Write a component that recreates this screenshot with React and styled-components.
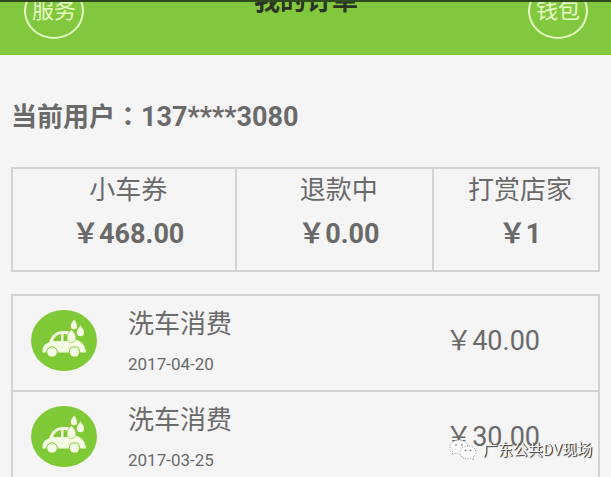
import React from "react";
import styled, { createGlobalStyle } from "styled-components";

const GlobalStyle = createGlobalStyle`
	* {
		box-sizing: border-box;
	}

	body {
		margin: 0;
		background: #f5f5f5;
		color: #6a6a6a;
		font-family: Roboto, "Noto Sans CJK SC", sans-serif;
		font-size: 26px;
		line-height: 32px;
	}
`;

const Page = styled.div`
	position: relative;
	height: 100vh;
	overflow: hidden;
`;

const Header = styled.header`
	display: flex;
	align-items: flex-end;
	justify-content: space-between;
	height: 55px;
	padding: 0 23px 16px 24px;
	border-top: 2px solid #2f4a1c;
	background: #82c83e;
	overflow: hidden;
`;

const Title = styled.h1`
	margin: 0;
	padding-bottom: 22px;
	color: #2b3324;
	font-size: 26px;
	line-height: 32px;
`;

const RoundButton = styled.button`
	flex: none;
	width: 60px;
	height: 56px;
	padding: 0;
	border: 2px solid #e6fbc4;
	border-radius: 50%;
	background: none;
	color: #e6fbc4;
	font-family: inherit;
	font-size: 22px;
	line-height: 28px;
`;

const Content = styled.main`
	padding: 0 11px;
`;

const User = styled.h2`
	margin: 0;
	padding: 44px 0 34px;
	font-size: 26px;
	line-height: 32px;
`;

const Colon = styled.span`
	font-family: "Noto Sans CJK TC", sans-serif;
`;

const Phone = styled.span`
	font-size: 27px;
`;

const Stats = styled.dl`
	display: grid;
	grid-template-columns: 224fr 198fr 167fr;
	margin: 0 0 22px;
	border: 2px solid #d3d3d3;
`;

const Stat = styled.div`
	padding: 5px 0 20px 8px;
	text-align: center;
	white-space: nowrap;

	& + & {
		border-left: 2px solid #d3d3d3;
	}
`;

const StatLabel = styled.dt`
	padding-bottom: 12px;
`;

const StatValue = styled.dd`
	margin: 0;
	font-size: 27px;
	font-weight: 700;
`;

const Orders = styled.ul`
	margin: 0;
	padding: 0;
	border: 2px solid #d3d3d3;
	list-style: none;
`;

const Order = styled.li`
	display: flex;
	align-items: center;
	height: 96px;
	padding: 0 58px 4px 18px;
	border-bottom: 2px solid #d3d3d3;
`;

const Badge = styled.svg`
	flex: none;
	width: 66px;
	height: 62px;
	margin-right: 31px;
`;

const Info = styled.div`
	flex: 1;
`;

const OrderName = styled.div`
	padding-bottom: 14px;
`;

const OrderDate = styled.time`
	display: block;
	font-size: 17px;
	line-height: 20px;
`;

const Price = styled.span`
	font-size: 27px;
`;

const Watermark = styled.div`
	position: absolute;
	right: 19px;
	bottom: 16px;
	display: flex;
	align-items: center;
	gap: 6px;
	color: #fff;
	font-size: 15px;
	line-height: 20px;
	text-shadow: 1px 1px 1px #333, 1px 0 0 #555;
`;

const stats = [
	{ label: "小车券", value: "￥468.00" },
	{ label: "退款中", value: "￥0.00" },
	{ label: "打赏店家", value: "￥1" },
];

const orders = [
	{ name: "洗车消费", date: "2017-04-20", price: "￥40.00" },
	{ name: "洗车消费", date: "2017-03-25", price: "￥30.00" },
];

const CarWash = () => (
	<Badge viewBox="0 0 66 62" aria-hidden="true">
		<ellipse cx="33" cy="30.500" rx="33" ry="30.500" fill="#80c936" />
		<path
			d="M11.500 42.500c0-6 2-9 6.500-10C20.500 25 25 21 32 21h3c5 0 7.500 3 9.500 8.500C50.500 31 54.500 35.500 55 42.500z"
			fill="#f3fbe2"
		/>
		<g fill="#80c936">
			<path d="M22 31c2-4.500 4-6.500 8-7v7z" />
			<path d="M32.500 24c2 0 3 0 3.500 1v6h-3.500z" />
			<circle cx="21" cy="42" r="5.800" />
			<circle cx="43.500" cy="42" r="5.800" />
		</g>
		<g fill="#f3fbe2">
			<circle cx="21" cy="42" r="4.800" />
			<circle cx="43.500" cy="42" r="4.800" />
			<path d="M43 9.500c2 3 3.200 4.500 3.200 6.500a3.200 3.200 0 0 1-6.400 0c0-2 1.200-3.500 3.200-6.500z" />
			<path d="M49.500 15.500c2 3 3.700 4.500 3.700 7a3.700 3.700 0 0 1-7.400 0c0-2.500 1.700-4 3.700-7z" />
			<path
				d="M40.500 19c3 4 4.500 6 4.500 9a4.500 4.500 0 0 1-9 0c0-3 1.500-5 4.500-9z"
				stroke="#80c936"
				strokeWidth="0.600"
			/>
		</g>
	</Badge>
);

const Bubbles = () => (
	<svg width="28" height="22" viewBox="0 0 28 22" aria-hidden="true">
		<g fill="#fff" stroke="#777" strokeWidth="0.800" strokeDasharray="1 1.500">
			<path d="M10 1C5 1 1 4 1 8c0 2 1 4 3 5l-1 3 4-2 3 1c5 0 9-3 9-7s-4-7-9-7z" />
			<path d="M19 7c-5 0-8 3-8 6.500s3 6.500 8 6.500l3-1 3 2-1-3c2-1 3-3 3-4.500C27 10 24 7 19 7z" />
		</g>
		<g fill="#555">
			<circle cx="7" cy="6" r="0.800" />
			<circle cx="13" cy="6" r="0.800" />
			<circle cx="16.500" cy="11.500" r="0.800" />
			<circle cx="21.500" cy="11.500" r="0.800" />
		</g>
	</svg>
);

const App = () => {
	return (
		<Page>
			<GlobalStyle />
			<Header>
				<RoundButton type="button">服务</RoundButton>
				<Title>我的订单</Title>
				<RoundButton type="button">钱包</RoundButton>
			</Header>
			<Content>
				<User>
					当前用户<Colon lang="zh-TW">：</Colon>
					<Phone>137****3080</Phone>
				</User>
				<Stats>
					{stats.map((stat) => (
						<Stat key={stat.label}>
							<StatLabel>{stat.label}</StatLabel>
							<StatValue>{stat.value}</StatValue>
						</Stat>
					))}
				</Stats>
				<Orders>
					{orders.map((order) => (
						<Order key={order.date}>
							<CarWash />
							<Info>
								<OrderName>{order.name}</OrderName>
								<OrderDate dateTime={order.date}>{order.date}</OrderDate>
							</Info>
							<Price>{order.price}</Price>
						</Order>
					))}
				</Orders>
			</Content>
			<Watermark>
				<Bubbles />
				<span>广东公共DV现场</span>
			</Watermark>
		</Page>
	);
};

export default App;
